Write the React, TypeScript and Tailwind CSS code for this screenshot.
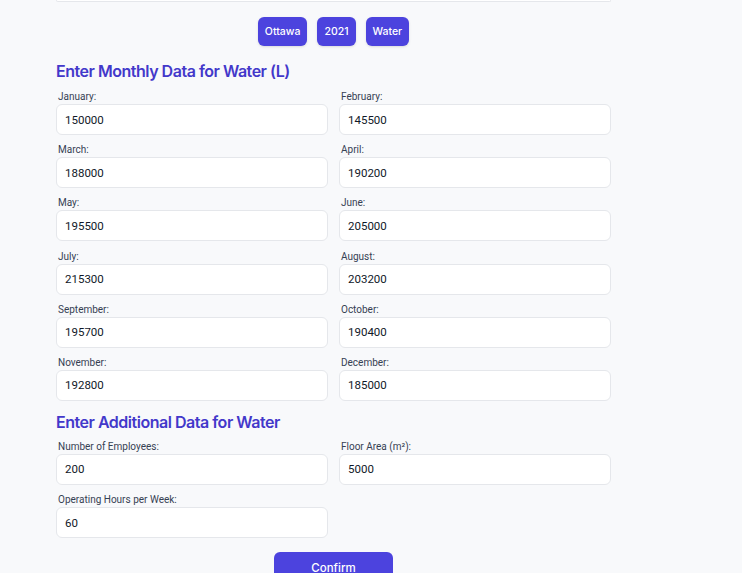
const months = [
  ["January", "150000"],
  ["February", "145500"],
  ["March", "188000"],
  ["April", "190200"],
  ["May", "195500"],
  ["June", "205000"],
  ["July", "215300"],
  ["August", "203200"],
  ["September", "195700"],
  ["October", "190400"],
  ["November", "192800"],
  ["December", "185000"],
];

const Field = ({ label, value }: { label: string; value: string }) => (
  <label className="flex flex-col">
    <span className="ml-[2px] text-[10px] leading-[13px] text-gray-700">{label}</span>
    <input
      type="text"
      defaultValue={value}
      className="mt-[1px] h-[31px] rounded-md border border-gray-200 bg-white px-2 text-[11.5px] text-gray-900 outline-none"
    />
  </label>
);

export default function App() {
  return (
    <div className="min-h-screen bg-[#f8f9fb] font-['Roboto',sans-serif]">
      <div className="ml-[56px] w-[555px] pb-6">
        <div className="h-[2px] rounded-b-md border-x border-b border-gray-200 bg-white" />

        <div className="mt-[15px] flex justify-center gap-[10px]">
          {["Ottawa", "2021", "Water"].map((t) => (
            <button
              key={t}
              className="h-[29px] rounded-md bg-[#4c43de] px-[7px] font-['Inter',sans-serif] text-[10.5px] font-medium text-white shadow-sm"
            >
              {t}
            </button>
          ))}
        </div>

        <h2 className="mt-[11px] font-['Inter',sans-serif] text-[16px] leading-[28px] font-semibold tracking-[-0.03em] text-[#4338ca]">
          Enter Monthly Data for Water (L)
        </h2>

        <div className="mt-[5px] grid grid-cols-2 gap-x-[11px] gap-y-[8.2px]">
          {months.map(([m, v]) => (
            <Field key={m} label={`${m}:`} value={v} />
          ))}
        </div>

        <h2 className="mt-[7px] font-['Inter',sans-serif] text-[16px] leading-[28px] font-semibold tracking-[-0.03em] text-[#4338ca]">
          Enter Additional Data for Water
        </h2>

        <div className="mt-[4px] grid grid-cols-2 gap-x-[11px] gap-y-[8.2px]">
          <Field label="Number of Employees:" value="200" />
          <Field label="Floor Area (m²):" value="5000" />
          <Field label="Operating Hours per Week:" value="60" />
        </div>

        <div className="mt-[14px] flex justify-center">
          <button className="h-[32px] w-[119px] rounded-md bg-[#4c43de] font-['Inter',sans-serif] text-[11.5px] font-medium text-white">
            Confirm
          </button>
        </div>
      </div>
    </div>
  );
}
